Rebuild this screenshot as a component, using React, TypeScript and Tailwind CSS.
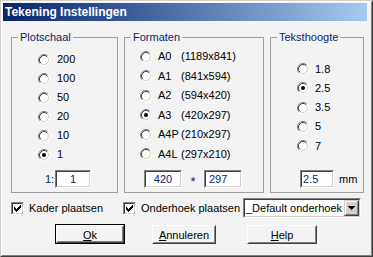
import React from 'react';

const checkPixels = [
    '......X',
    '.....XX',
    'X...XXX',
    'XX.XXX.',
    'XXXXX..',
    '.XXX...',
    '..X....',
];

const Radio: React.FC<{ checked?: boolean }> = ({ checked }) => (
    <svg width="12" height="12" viewBox="0 0 12 12" className="shrink-0">
        <circle cx="6" cy="6" r="4.5" fill="#fff" />
        <path d="M2.11 9.89 A5.5 5.5 0 0 1 9.89 2.11" fill="none" stroke="#808080" />
        <path d="M9.89 2.11 A5.5 5.5 0 0 1 2.11 9.89" fill="none" stroke="#fff" />
        <path d="M2.82 9.18 A4.5 4.5 0 0 1 9.18 2.82" fill="none" stroke="#404040" />
        <path d="M9.18 2.82 A4.5 4.5 0 0 1 2.82 9.18" fill="none" stroke="#d4d0c8" />
        {checked && <circle cx="6" cy="6" r="2" fill="#000" />}
    </svg>
);

const Checkbox: React.FC = () => (
    <span className="w-[13px] h-[13px] shrink-0 flex border border-t-[#808080] border-l-[#808080] border-r-white border-b-white">
        <span className="flex-1 flex items-center justify-center border border-t-[#404040] border-l-[#404040] border-r-[#d4d0c8] border-b-[#d4d0c8] bg-white">
            <svg width="7" height="7" viewBox="0 0 7 7" shapeRendering="crispEdges">
                {checkPixels.map((row, y) =>
                    row.split('').map((c, x) =>
                        c === 'X' ? <rect key={`${x}-${y}`} x={x} y={y} width="1" height="1" fill="#000" /> : null
                    )
                )}
            </svg>
        </span>
    </span>
);

const Field: React.FC<{ value: string; className: string; align?: 'center' | 'left'; pad?: string }> = ({
    value,
    className,
    align = 'center',
    pad = 'pl-[3px]'
}) => (
    <span className={`flex h-[18px] border border-t-[#808080] border-l-[#808080] border-r-white border-b-white ${className}`}>
        <span
            className={`flex-1 flex items-center border border-t-[#404040] border-l-[#404040] border-r-[#d4d0c8] border-b-[#d4d0c8] bg-white text-[#0a246a] ${
                align === 'center' ? 'justify-center' : pad
            }`}
        >
            {value}
        </span>
    </span>
);

const Button: React.FC<{ label: string; rest: string; width: string; isDefault?: boolean }> = ({
    label,
    rest,
    width,
    isDefault
}) => {
    const face = (
        <span className="flex-1 flex border border-t-white border-l-white border-r-[#404040] border-b-[#404040]">
            <span className="flex-1 flex items-center justify-center pt-[2px] border border-t-[#f3f3f3] border-l-[#f3f3f3] border-r-[#808080] border-b-[#808080]">
                <span className="underline underline-offset-[1px]">{label}</span>
                {rest}
            </span>
        </span>
    );
    if (isDefault) {
        return <span className={`flex h-[20px] border border-black ${width}`}>{face}</span>;
    }
    return <span className={`flex h-[19px] mt-px ${width}`}>{face}</span>;
};

const Group: React.FC<{ title: string; width: string; children: React.ReactNode }> = ({ title, width, children }) => (
    <fieldset className={`h-[162px] border border-[#a0a0a0] ${width}`}>
        <legend className="ml-[6px] px-[2px] text-[#0a246a] leading-[13px]">{title}</legend>
        <div className="h-[148px] flex flex-col">{children}</div>
    </fieldset>
);

const plotschaal = ['200', '100', '50', '20', '10', '1'];
const formaten = [
    ['A0', '(1189x841)'],
    ['A1', '(841x594)'],
    ['A2', '(594x420)'],
    ['A3', '(420x297)'],
    ['A4P', '(210x297)'],
    ['A4L', '(297x210)'],
];
const teksthoogte = ['1.8', '2.5', '3.5', '5', '7'];

export default function App() {
    return (
        <div className="w-[373px] h-[257px] bg-[#f3f3f3] border border-t-[#d4d0c8] border-l-[#d4d0c8] border-r-[#404040] border-b-[#404040] font-['Liberation_Sans',Arial,sans-serif] text-[11px] leading-[13px] text-black">
            <div className="h-full flex flex-col pt-px pl-px pr-[4px] pb-[2px] border border-t-white border-l-white border-r-[#808080] border-b-[#808080]">
                <div className="h-[18px] shrink-0 flex items-center pl-[2px] bg-linear-to-r from-[#0a246a] to-[#a6caf0]">
                    <span className="text-white font-bold text-[12px]">Tekening Instellingen</span>
                </div>

                <div className="flex flex-col pl-[8px] pt-[10px]">
                    <div className="flex gap-[6px]">
                        <Group title="Plotschaal" width="w-[107px]">
                            <div className="flex flex-col pt-[6px]">
                                {plotschaal.map(v => (
                                    <div key={v} className="h-[19px] flex items-center gap-[7px] pl-[26px]">
                                        <Radio checked={v === '1'} />
                                        <span>{v}</span>
                                    </div>
                                ))}
                            </div>
                            <div className="mt-auto mb-[4px] flex items-center pl-[33px]">
                                <span className="w-[10px] text-[#0a246a]">1:</span>
                                <Field value="1" className="w-[36px]" />
                            </div>
                        </Group>

                        <Group title="Formaten" width="w-[140px]">
                            <div className="flex flex-col pt-[3px]">
                                {formaten.map(([code, dims]) => (
                                    <div key={code} className="h-[19.5px] flex items-center gap-[6px] pl-[15px]">
                                        <Radio checked={code === 'A3'} />
                                        <span className="flex">
                                            <span className="w-[23px]">{code}</span>
                                            <span>{dims}</span>
                                        </span>
                                    </div>
                                ))}
                            </div>
                            <div className="mt-auto mb-[4px] flex items-center pl-[19px]">
                                <Field value="420" className="w-[38px]" />
                                <span className="w-[22px] h-[18px] text-center text-[13px] leading-[23px] text-[#0a246a]">*</span>
                                <Field value="297" className="w-[38px]" align="left" />
                            </div>
                        </Group>

                        <Group title="Teksthoogte" width="w-[94px]">
                            <div className="flex flex-col pt-[15.5px]">
                                {teksthoogte.map(v => (
                                    <div key={v} className="h-[19.25px] flex items-center gap-[6px] pl-[26px]">
                                        <Radio checked={v === '2.5'} />
                                        <span>{v}</span>
                                    </div>
                                ))}
                            </div>
                            <div className="mt-auto mb-[4px] flex items-center pl-[29px] gap-[5px]">
                                <Field value="2.5" className="w-[34px]" align="left" pad="pl-px" />
                                <span>mm</span>
                            </div>
                        </Group>
                    </div>

                    <div className="mt-[5px] h-[20px] flex items-center">
                        <div className="w-[112px] flex items-center gap-[5px]">
                            <Checkbox />
                            <span>Kader plaatsen</span>
                        </div>
                        <div className="w-[120px] flex items-center gap-[5px]">
                            <Checkbox />
                            <span>Onderhoek plaatsen</span>
                        </div>
                        <div className="w-[118px] h-[20px] flex border border-t-[#808080] border-l-[#808080] border-r-white border-b-white">
                            <div className="flex-1 flex items-center border border-t-[#404040] border-l-[#404040] border-r-[#d4d0c8] border-b-[#d4d0c8] bg-white">
                                <span className="flex-1 pl-px whitespace-nowrap overflow-hidden">_Default onderhoek</span>
                                <span className="w-[15px] h-full flex border border-t-[#d4d0c8] border-l-[#d4d0c8] border-r-[#404040] border-b-[#404040] bg-[#d4d0c8]">
                                    <span className="flex-1 flex items-center justify-center border border-t-white border-l-white border-r-[#808080] border-b-[#808080]">
                                        <svg width="7" height="4" viewBox="0 0 7 4" shapeRendering="crispEdges">
                                            <path d="M0 0h7v1h-1v1h-1v1h-1v1h-1v-1h-1v-1h-1v-1h-1z" fill="#000" />
                                        </svg>
                                    </span>
                                </span>
                            </div>
                        </div>
                    </div>

                    <div className="mt-[6px] flex items-start pl-[44px]">
                        <Button label="O" rest="k" width="w-[70px]" isDefault />
                        <span className="ml-[27px]">
                            <Button label="A" rest="nnuleren" width="w-[64px]" />
                        </span>
                        <span className="ml-[31px]">
                            <Button label="H" rest="elp" width="w-[70px]" />
                        </span>
                    </div>
                </div>
            </div>
        </div>
    );
}
